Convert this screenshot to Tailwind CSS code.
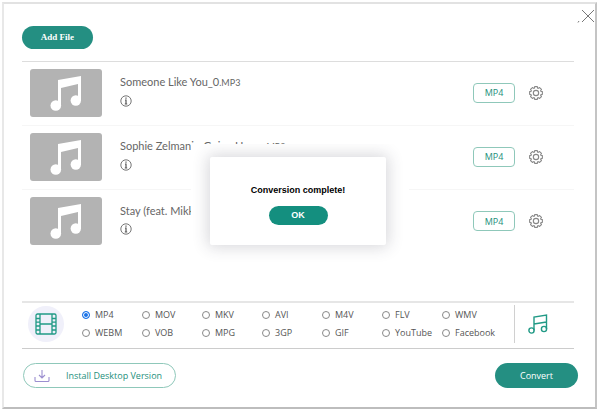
<!DOCTYPE html>
<html lang="en">
<head>
  <meta charset="UTF-8">
  <meta name="viewport" content="width=device-width, initial-scale=1">
  <title>Audio Converter</title>
  <script src="https://cdn.jsdelivr.net/npm/@tailwindcss/browser@4"></script>
</head>
<body class="bg-white min-h-screen flex font-['Open_Sans','Noto_Sans',sans-serif] text-[#666]">
  <!-- shared icons -->
  <svg class="hidden">
    <symbol id="note" viewBox="0 0 32 36">
      <g fill="#fff">
        <path d="M8 5 31 1v25h-3V9L11 13v18H8z"/>
        <circle cx="5.800" cy="30.500" r="5.300"/>
        <circle cx="25.800" cy="25.500" r="5.200"/>
      </g>
    </symbol>
    <symbol id="info" viewBox="0 0 12 12">
      <circle cx="6" cy="6" r="5.200" fill="none" stroke="#666" stroke-width=".9"/>
      <path d="M6 2.500v1.200M5 5h1v4M4.800 9h2.400" fill="none" stroke="#555" stroke-width="1.200"/>
    </symbol>
    <symbol id="gear" viewBox="0 0 20 20">
      <g fill="none" stroke="#888" stroke-width="1.600" stroke-linejoin="round">
        <path d="M8.100.9H11.900L12.400 3.100 13.200 3.400 15.100 2.200 17.800 4.900 16.600 6.800 16.900 7.600 19.100 8.100V11.900L16.900 12.400 16.600 13.200 17.800 15.100 15.100 17.800 13.200 16.600 12.400 16.900 11.900 19.100H8.100L7.600 16.900 6.800 16.600 4.900 17.800 2.200 15.100 3.400 13.200 3.100 12.400.9 11.900V8.100L3.100 7.600 3.400 6.800 2.200 4.900 4.900 2.200 6.800 3.400 7.600 3.100Z"/>
        <circle cx="10" cy="10" r="3.800"/>
      </g>
    </symbol>
  </svg>

  <main class="relative flex-1 flex flex-col m-[2px] mr-[3px] border-2 border-t-[#e2e2e2] border-l-[#e8e8e8] border-r-[#c4c4c4] border-b-[#bdbdbd] pl-[18px] pr-[17px] pt-[22px] pb-[19px]">
    <button aria-label="Close" class="absolute right-0 top-[5px]">
      <svg class="w-[18px] h-[14px]" viewBox="0 0 18 14" fill="none" stroke="#777"><path d="m5 1 12 12M17 1 5 13M1 13.500l1-1.500"/></svg>
    </button>

    <div>
      <button class="block w-[71px] h-[23px] rounded-full bg-[#248f82] text-white text-[9px] font-bold font-['Liberation_Serif',serif]">Add File</button>
    </div>

    <!-- file list -->
    <ul class="mt-3 mr-1 border-t border-[#ddd]">
      <li class="h-16 pl-2 pr-[31px] pb-[2px] flex items-center border-b border-[#f6f6f6]">
        <div class="w-[72px] h-12 rounded-[3px] bg-[#b3b3b3] flex items-center justify-center"><svg class="w-8 h-9"><use href="#note"/></svg></div>
        <div class="flex-1 ml-[18px] pb-[6px]">
          <p class="text-[11px] leading-5 font-['Lato',sans-serif]">Someone Like You_0<span class="text-[9px]">.MP3</span></p>
          <svg class="w-3 h-3 mt-[2px]"><use href="#info"/></svg>
        </div>
        <button class="w-[42px] h-5 rounded-[4px] border border-[#8fc8ba] text-[#248f7c] text-[9px] leading-none">MP4</button>
        <button aria-label="Settings" class="ml-[14px]"><svg class="w-[14px] h-[14px]"><use href="#gear"/></svg></button>
      </li>
      <li class="h-16 pl-2 pr-[31px] pb-[2px] flex items-center border-b border-[#f6f6f6]">
        <div class="w-[72px] h-12 rounded-[3px] bg-[#b3b3b3] flex items-center justify-center"><svg class="w-8 h-9"><use href="#note"/></svg></div>
        <div class="flex-1 ml-[18px] pb-[6px]">
          <p class="text-[11px] leading-5 font-['Lato',sans-serif]">Sophie Zelmani - Going Home<span class="text-[9px]">.MP3</span></p>
          <svg class="w-3 h-3 mt-[2px]"><use href="#info"/></svg>
        </div>
        <button class="w-[42px] h-5 rounded-[4px] border border-[#8fc8ba] text-[#248f7c] text-[9px] leading-none">MP4</button>
        <button aria-label="Settings" class="ml-[14px]"><svg class="w-[14px] h-[14px]"><use href="#gear"/></svg></button>
      </li>
      <li class="h-16 pl-2 pr-[31px] pb-[2px] flex items-center">
        <div class="w-[72px] h-12 rounded-[3px] bg-[#b3b3b3] flex items-center justify-center"><svg class="w-8 h-9"><use href="#note"/></svg></div>
        <div class="flex-1 ml-[18px] pb-[6px]">
          <p class="text-[11px] leading-5 font-['Lato',sans-serif]">Stay (feat. Mikky)</p>
          <svg class="w-3 h-3 mt-[2px]"><use href="#info"/></svg>
        </div>
        <button class="w-[42px] h-5 rounded-[4px] border border-[#8fc8ba] text-[#248f7c] text-[9px] leading-none">MP4</button>
        <button aria-label="Settings" class="ml-[14px]"><svg class="w-[14px] h-[14px]"><use href="#gear"/></svg></button>
      </li>
    </ul>

    <!-- output format -->
    <section class="mt-auto mr-1 h-12 pb-1 flex items-center border-t-2 border-b border-t-[#e6e6e6] border-b-[#ccc]">
      <div class="ml-[6px] size-9 rounded-full bg-[#f0f0fa] flex items-center justify-center">
        <svg class="w-[22px] h-[22px]" viewBox="0 0 22 22" fill="none" stroke="#219a86" stroke-width="1.300">
          <rect x="1" y="1" width="20" height="20" rx="1.500"/>
          <path d="M5 1v20M17 1v20M5 11h12M1 5.500h4M1 9.200h4M1 13h4M1 17h4M17 5.500h4M17 9.200h4M17 13h4M17 17h4"/>
        </svg>
      </div>
      <div class="flex-1 ml-[18px] grid grid-cols-[repeat(6,60px)_1fr] text-[9px] leading-[18px] text-[#555]">
        <label class="flex items-center gap-[5px]"><input type="radio" name="format" class="appearance-none size-2 rounded-full border border-[#888] checked:border-[#1a73e8] checked:bg-[#1a73e8] checked:shadow-[inset_0_0_0_1px_#fff]" checked>MP4</label>
        <label class="flex items-center gap-[5px]"><input type="radio" name="format" class="appearance-none size-2 rounded-full border border-[#888]">MOV</label>
        <label class="flex items-center gap-[5px]"><input type="radio" name="format" class="appearance-none size-2 rounded-full border border-[#888]">MKV</label>
        <label class="flex items-center gap-[5px]"><input type="radio" name="format" class="appearance-none size-2 rounded-full border border-[#888]">AVI</label>
        <label class="flex items-center gap-[5px]"><input type="radio" name="format" class="appearance-none size-2 rounded-full border border-[#888]">M4V</label>
        <label class="flex items-center gap-[5px]"><input type="radio" name="format" class="appearance-none size-2 rounded-full border border-[#888]">FLV</label>
        <label class="flex items-center gap-[5px]"><input type="radio" name="format" class="appearance-none size-2 rounded-full border border-[#888]">WMV</label>
        <label class="flex items-center gap-[5px]"><input type="radio" name="format" class="appearance-none size-2 rounded-full border border-[#888]">WEBM</label>
        <label class="flex items-center gap-[5px]"><input type="radio" name="format" class="appearance-none size-2 rounded-full border border-[#888]">VOB</label>
        <label class="flex items-center gap-[5px]"><input type="radio" name="format" class="appearance-none size-2 rounded-full border border-[#888]">MPG</label>
        <label class="flex items-center gap-[5px]"><input type="radio" name="format" class="appearance-none size-2 rounded-full border border-[#888]">3GP</label>
        <label class="flex items-center gap-[5px]"><input type="radio" name="format" class="appearance-none size-2 rounded-full border border-[#888]">GIF</label>
        <label class="flex items-center gap-[5px]"><input type="radio" name="format" class="appearance-none size-2 rounded-full border border-[#888]">YouTube</label>
        <label class="flex items-center gap-[5px]"><input type="radio" name="format" class="appearance-none size-2 rounded-full border border-[#888]">Facebook</label>
      </div>
      <button aria-label="Audio formats" class="h-[38px] w-[60px] pl-[13px] border-l border-[#d0d0d0]">
        <svg class="w-5 h-5" viewBox="0 0 20 20" fill="none" stroke="#219a86" stroke-width="1.400">
          <path d="M6 16.500V3l12.500-2v14M6 10l12.500-2"/>
          <circle cx="3.500" cy="16.500" r="2.600"/>
          <circle cx="16" cy="15" r="2.600"/>
        </svg>
      </button>
    </section>

    <footer class="mt-[14px] pl-[1px] flex items-center justify-between">
      <button class="w-[153px] h-[25px] pl-[10px] flex items-center gap-4 rounded-full border border-[#8fc8ba] text-[#248f7c] text-[9px]">
        <svg class="w-4 h-3" viewBox="0 0 16 12" fill="none" stroke="#9c8fd0" stroke-width="1.100"><path d="M1 7v3.500q0 1 1 1h12q1 0 1-1V7M8 0v8M5 5l3 3 3-3"/></svg>
        Install Desktop Version
      </button>
      <button class="w-[83px] h-[25px] rounded-full bg-[#248f82] text-white text-[9px]">Convert</button>
    </footer>
  </main>

  <!-- dialog with its blank surround -->
  <div class="absolute left-1/2 -translate-x-1/2 top-36 w-[218px] p-[13px] pl-[19px] pr-[23px] pb-6 bg-white overflow-hidden" role="dialog" aria-labelledby="done">
    <div class="h-[88px] pt-6 flex flex-col items-center bg-white rounded-[2px] shadow-[0_0_16px_2px_rgba(50,50,70,0.2)]">
      <p id="done" class="text-[9px] leading-[18px] font-bold text-black font-['Liberation_Sans',sans-serif]">Conversion complete!</p>
      <button class="mt-[7px] w-[59px] h-[19px] rounded-full bg-[#148f7f] text-white text-[9px] font-bold font-['Liberation_Sans',sans-serif]">OK</button>
    </div>
  </div>
</body>
</html>
